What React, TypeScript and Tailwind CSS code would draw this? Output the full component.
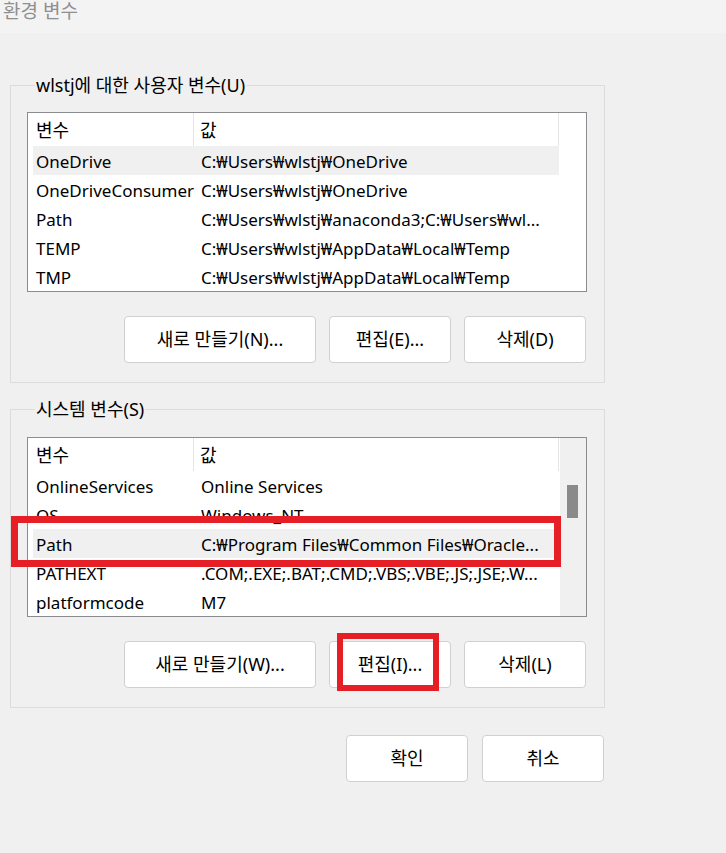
import React from 'react';

type Row = { name: string; value: string };

const userRows: Row[] = [
  { name: 'OneDrive', value: 'C:₩Users₩wlstj₩OneDrive' },
  { name: 'OneDriveConsumer', value: 'C:₩Users₩wlstj₩OneDrive' },
  { name: 'Path', value: 'C:₩Users₩wlstj₩anaconda3;C:₩Users₩wl...' },
  { name: 'TEMP', value: 'C:₩Users₩wlstj₩AppData₩Local₩Temp' },
  { name: 'TMP', value: 'C:₩Users₩wlstj₩AppData₩Local₩Temp' },
];

const systemRows: Row[] = [
  { name: 'OnlineServices', value: 'Online Services' },
  { name: 'OS', value: 'Windows_NT' },
  { name: 'Path', value: 'C:₩Program Files₩Common Files₩Oracle...' },
  { name: 'PATHEXT', value: '.COM;.EXE;.BAT;.CMD;.VBS;.VBE;.JS;.JSE;.W...' },
  { name: 'platformcode', value: 'M7' },
];

function VarList({ rows, active, scrollbar }: { rows: Row[]; active: number; scrollbar?: boolean }) {
  return (
    <div className="flex h-[180px] w-[560px] border border-[#8a8c8f] bg-white text-[17px]">
      <div className="w-[532px] pl-[5px]">
        <div className="flex h-[33px] text-[18px]">
          <div className="flex w-[161px] items-center border-r border-[#e5e5e5] pt-[2px] pl-[3px]">변수</div>
          <div className="flex w-[365px] items-center border-r border-[#e5e5e5] pt-[2px] pl-[6px]">값</div>
        </div>
        {rows.map((r, i) => (
          <div
            key={r.name}
            className={
              i === active
                ? 'flex h-[29px] w-[526px] items-center bg-[#f0f0f0] pt-[2px]'
                : 'flex h-[29px] w-[526px] items-center pt-[2px]'
            }
          >
            <div className="w-[161px] pl-[3px] whitespace-nowrap">{r.name}</div>
            <div className="overflow-hidden pl-[7px] whitespace-nowrap">{r.value}</div>
          </div>
        ))}
      </div>
      {scrollbar ? (
        <div className="w-[26px] bg-[#f0f0f0] pt-[47px] pl-[7px]">
          <div className="h-[33px] w-[11px] bg-[#8a8a8a]" />
        </div>
      ) : (
        <div className="w-[26px]" />
      )}
    </div>
  );
}

function Btn({ label, w }: { label: string; w: string }) {
  return (
    <button className={`h-[47px] rounded-[4px] border border-[#d0d0d0] bg-white text-[18px] text-black ${w}`}>
      {label}
    </button>
  );
}

function Group({
  legend,
  rows,
  active,
  scrollbar,
  buttons,
  listGap,
}: {
  legend: string;
  rows: Row[];
  active: number;
  scrollbar?: boolean;
  buttons: string[];
  listGap: string;
}) {
  return (
    <fieldset className="ml-[10px] w-[595px] border border-[#dcdcdc] pr-[17px] pb-[19px] pl-[16px]">
      <legend className="ml-[8px] px-[1px] text-[18px] leading-[24px]">{legend}</legend>
      <div className={listGap}>
        <VarList rows={rows} active={active} scrollbar={scrollbar} />
      </div>
      <div className="mt-[24px] flex justify-end gap-[13px] pr-[1px]">
        <Btn label={buttons[0]} w="w-[192px]" />
        <Btn label={buttons[1]} w="w-[122px]" />
        <Btn label={buttons[2]} w="w-[122px]" />
      </div>
    </fieldset>
  );
}

export default function App() {
  return (
    <div className="relative h-[853px] w-[726px] overflow-hidden bg-[#f0f0f0] font-['Noto_Sans','Noto_Sans_CJK_KR',sans-serif] text-[18px] text-black">
      <div className="h-[33px] bg-[#f3f3f3] pl-[3px] text-[19px] leading-[22px] text-[#8f8f8f]">환경 변수</div>

      <div className="mt-[40px]">
        <Group
          legend="wlstj에 대한 사용자 변수(U)"
          rows={userRows}
          active={0}
          listGap="mt-[15px]"
          buttons={['새로 만들기(N)...', '편집(E)...', '삭제(D)']}
        />
      </div>

      <div className="mt-[14px]">
        <Group
          legend="시스템 변수(S)"
          rows={systemRows}
          active={2}
          scrollbar
          listGap="mt-[16px]"
          buttons={['새로 만들기(W)...', '편집(I)...', '삭제(L)']}
        />
      </div>

      <div className="mt-[27px] flex w-[604px] justify-end gap-[14px]">
        <Btn label="확인" w="w-[122px]" />
        <Btn label="취소" w="w-[122px]" />
      </div>

      {/* red highlight marks drawn over the dialog */}
      <div className="absolute top-[516px] left-[11px] h-[51px] w-[550px] border-[7px] border-[#e51f25]" />
      <div className="absolute top-[633px] left-[337px] h-[58px] w-[102px] border-[6px] border-[#e51f25]" />
    </div>
  );
}
